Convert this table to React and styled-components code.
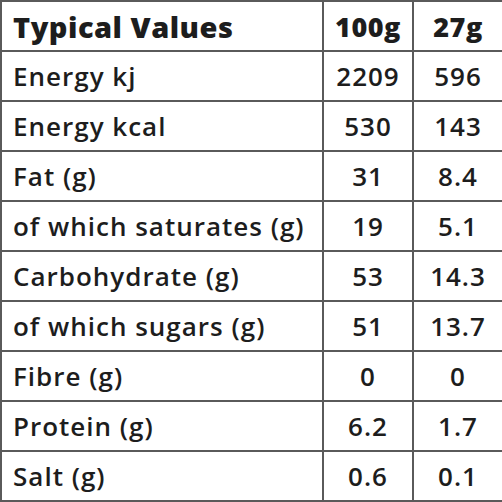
import styled, { createGlobalStyle } from 'styled-components'

const GlobalStyle = createGlobalStyle`
  html, body {
    margin: 0;
    padding: 0;
    background: #fff;
  }
`

const rows = [
  ['Energy kj', '2209', '596'],
  ['Energy kcal', '530', '143'],
  ['Fat (g)', '31', '8.4'],
  ['of which saturates (g)', '19', '5.1'],
  ['Carbohydrate (g)', '53', '14.3'],
  ['of which sugars (g)', '51', '13.7'],
  ['Fibre (g)', '0', '0'],
  ['Protein (g)', '6.2', '1.7'],
  ['Salt (g)', '0.6', '0.1'],
]

export default function App() {
  return (
    <>
      <GlobalStyle />
      <Table>
        <colgroup>
          <col style={{ width: 322 }} />
          <col style={{ width: 90 }} />
          <col style={{ width: 90 }} />
        </colgroup>
        <thead>
          <tr>
            <HeadLabel>Typical Values</HeadLabel>
            <HeadValue>100g</HeadValue>
            <HeadValue>27g</HeadValue>
          </tr>
        </thead>
        <tbody>
          {rows.map(([label, a, b]) => (
            <tr key={label}>
              <Label>{label}</Label>
              <Value>{a}</Value>
              <Value>{b}</Value>
            </tr>
          ))}
        </tbody>
      </Table>
    </>
  )
}

const Table = styled.table`
  width: 502px;
  height: 502px;
  table-layout: fixed;
  border-collapse: collapse;
  color: #1d1d1d;
  font-family: 'Open Sans', 'Liberation Sans', sans-serif;

  td, th {
    border: 2px solid #5a5a5a;
    height: 48px;
    padding: 0;
    vertical-align: middle;
  }
`

const Label = styled.td`
  padding-left: 11px !important;
  font-size: 26px;
  font-weight: 600;
  letter-spacing: 1px;
  text-align: left;
`

const Value = styled.td`
  font-size: 26px;
  font-weight: 600;
  letter-spacing: 1px;
  text-align: center;
`

const HeadLabel = styled.th`
  padding-left: 11px !important;
  font-size: 29px;
  font-weight: 800;
  letter-spacing: 0.5px;
  text-align: left;
`

const HeadValue = styled.th`
  font-size: 27px;
  font-weight: 800;
  letter-spacing: 0.5px;
  text-align: center;
`
